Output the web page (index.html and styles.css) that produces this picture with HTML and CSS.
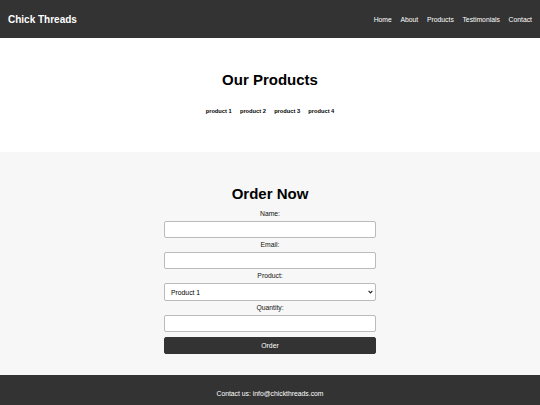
FILE: index.html
```html
<!DOCTYPE html>
<html lang="en">
<head>
<meta charset="utf-8">
<title>Chick Threads</title>
<link rel="stylesheet" href="styles.css">
</head>
<body>
<header class="site-header">
  <div class="brand">Chick Threads</div>
  <nav class="nav">
    <a href="#">Home</a>
    <a href="#">About</a>
    <a href="#">Products</a>
    <a href="#">Testimonials</a>
    <a href="#">Contact</a>
  </nav>
</header>
<section class="products">
  <h2 class="section-title">Our Products</h2>
  <div class="product-list">
    <span class="product">product 1</span>
    <span class="product">product 2</span>
    <span class="product">product 3</span>
    <span class="product">product 4</span>
  </div>
</section>
<section class="order">
  <h2 class="section-title">Order Now</h2>
  <form class="order-form">
    <label class="field-label" for="name">Name:</label>
    <input class="field" id="name" type="text">
    <label class="field-label" for="email">Email:</label>
    <input class="field" id="email" type="email">
    <label class="field-label" for="product">Product:</label>
    <div class="select-wrap">
      <select class="field select" id="product">
        <option>Product 1</option>
        <option>Product 2</option>
        <option>Product 3</option>
        <option>Product 4</option>
      </select>
      <svg class="chev" width="5" height="4" viewBox="0 0 5 4"><path d="M0.6 0.8 L2.5 2.9 L4.4 0.8" fill="none" stroke="#222" stroke-width="1.1"/></svg>
    </div>
    <label class="field-label" for="qty">Quantity:</label>
    <input class="field" id="qty" type="number">
    <button class="submit" type="button">Order</button>
  </form>
</section>
<footer class="site-footer">Contact us: info@chickthreads.com</footer>
</body>
</html>
```
FILE: styles.css
```css
* { box-sizing: border-box; }
html, body { margin: 0; padding: 0; }
body {
  font-family: "Liberation Sans", Arial, sans-serif;
  color: #000;
  background: #fff;
}
.site-header {
  height: 38px;
  background: #333;
  color: #fff;
  display: flex;
  align-items: center;
  justify-content: space-between;
  padding: 0 8px;
}
.brand {
  font-weight: bold;
  font-size: 10px;
  line-height: 12px;
  padding-top: 1px;
}
.nav {
  display: flex;
  gap: 8.7px;
  padding-top: 1px;
}
.nav a {
  color: #fff;
  text-decoration: none;
  font-size: 6.8px;
  line-height: 8px;
}
.products {
  height: 114px;
  display: flex;
  flex-direction: column;
  align-items: center;
  padding-top: 33px;
}
.section-title {
  margin: 0;
  font-size: 15px;
  line-height: 17px;
  font-weight: bold;
}
.product-list {
  display: flex;
  gap: 8.3px;
  margin-top: 20px;
}
.product {
  font-weight: bold;
  font-size: 5.7px;
  line-height: 7px;
}
.order {
  height: 223px;
  background: #f7f7f7;
  display: flex;
  flex-direction: column;
  align-items: center;
  padding-top: 33px;
}
.order-form {
  width: 212px;
  display: flex;
  flex-direction: column;
  align-items: stretch;
  margin-top: 8px;
}
.field-label {
  text-align: center;
  font-size: 6.8px;
  line-height: 8px;
  margin-bottom: 3px;
  color: #111;
}
.field {
  height: 17px;
  border: 1px solid #bbb;
  border-radius: 2px;
  background: #fff;
  margin: 0 0 3px 0;
  padding: 0 6px;
  font-family: "Liberation Sans", Arial, sans-serif;
  font-size: 6.8px;
  color: #000;
}
.select-wrap {
  position: relative;
  display: flex;
  flex-direction: column;
}
.select {
  height: 18px;
  margin-bottom: 3px;
  appearance: none;
  -webkit-appearance: none;
  padding: 0 6px;
}
.chev {
  position: absolute;
  right: 3px;
  top: 7px;
  pointer-events: none;
}
.submit {
  height: 17px;
  margin-top: 2px;
  background: #333;
  color: #fff;
  border: 1px solid #333;
  border-radius: 2px;
  font-family: "Liberation Sans", Arial, sans-serif;
  font-size: 6.8px;
  padding: 0;
}
.site-footer {
  height: 30px;
  background: #333;
  color: #fff;
  display: flex;
  align-items: center;
  justify-content: center;
  font-size: 6.8px;
  padding-top: 6px;
}
```
